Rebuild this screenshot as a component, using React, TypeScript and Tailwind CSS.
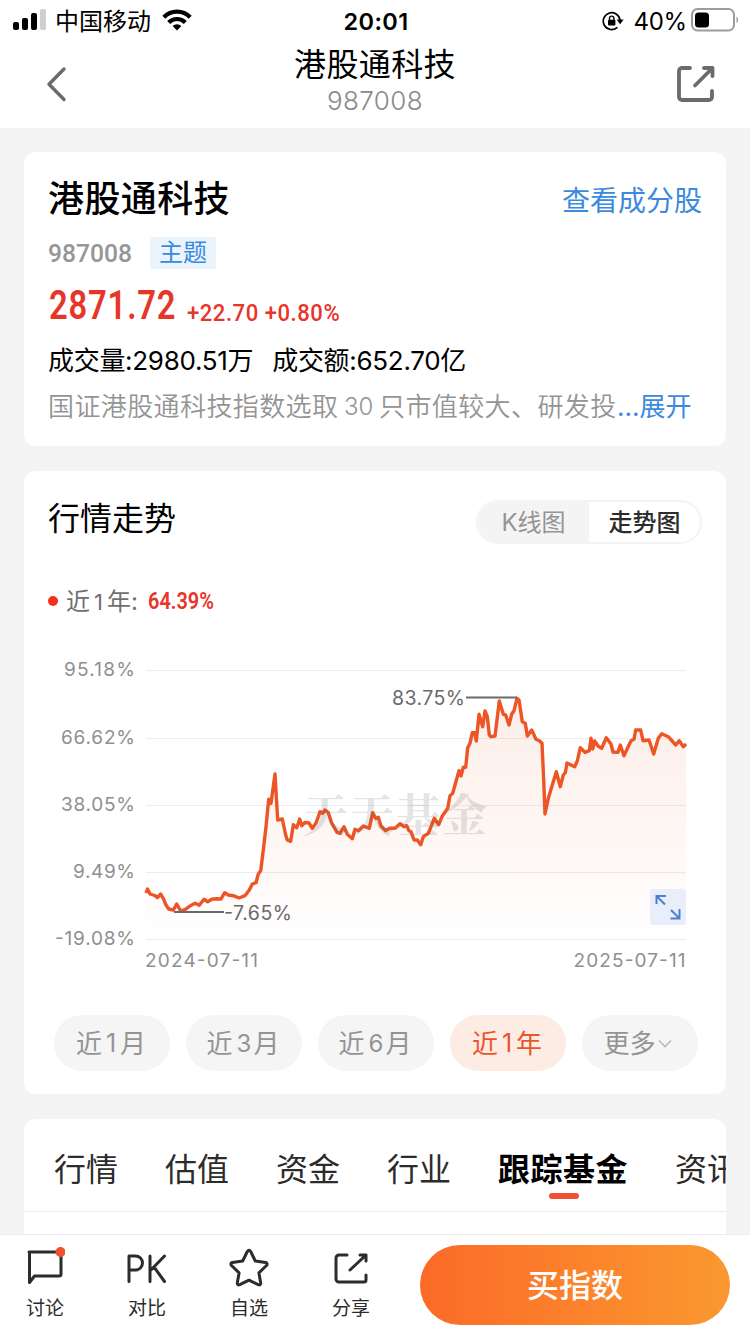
const BASE_FONT = "font-['Inter','Noto_Sans_CJK_SC',sans-serif]";
const DIN_FONT = "font-['Roboto','Noto_Sans_CJK_SC',sans-serif]";

const GRID = [
  { y: 670, label: '95.18%', width: 71 },
  { y: 738, label: '66.62%', width: 74 },
  { y: 805, label: '38.05%', width: 74 },
  { y: 872, label: '9.49%', width: 62 },
  { y: 939, label: '-19.08%', width: 80 }
];

const TREND =
  '146,893 147.5,889 150,894 154.7,895.5 157.5,897.5 160.7,894 163.3,898.5 166,905 168.7,909 173.3,910 176.7,904 180.7,911 185,909.7 190,906 195,903.3 199.3,905.3 204,899.3 207.7,901.7 211.7,899.3 216.7,898.7 221,899 224.7,892.7 228.3,895 233.3,895.7 239,898 245,895.7 249.3,890 252.3,884 256,882.7 258.3,874 260.7,870.7 263.3,850 266,826.7 268.7,799.3 271,803.3 275,774 277.7,820 282.3,819 285.7,835 287.3,840 290.7,841.3 293.3,824.7 296.7,827.7 299.7,819 301.7,825.7 305,822.5 309,823 312.3,828.3 316,823 320,811.7 322.7,813.3 325,810 328.3,812.5 331.7,823 337,832.3 340,833.3 344,826.7 347.3,834.3 352.3,838.7 355,829.3 358.3,830.7 363.3,826 369.3,828.3 372.7,812.7 375.7,818.3 378.3,817.3 381,826 385.7,830.7 389.3,828.3 395,828.3 400,823.7 404,826.7 406.7,825.7 409,830.7 411,831.7 414,840 417.3,840 420.7,844.7 423.3,836.7 428.3,833.3 434.3,818.3 438.7,824.7 442.3,816 447.7,808.3 450,795.7 452.7,793.3 455,785 459,770.7 461,776 463.3,767.3 465.7,767.3 467.7,747.7 470,743.3 472.3,732.7 474.7,732.7 476.3,741 479,714.3 482.7,726.7 485,711 487.3,716.7 489.3,735 491,736.7 495,736 499.3,701 503.3,714.3 505.7,715 509,725 511.7,714 514,710.7 517,698.3 519,700 522.3,721.7 525.3,723.3 527.3,736 531.7,730 536,739.3 539.3,740.7 542,743.3 543.7,780 545,814 548.3,798.3 556.3,771.7 560.3,786.7 563.3,775 565.3,772.7 567,763 574.7,766.7 577.3,761 580.3,747.7 585,752.3 589.3,750.7 591,738.3 592.7,749 594.7,741 598,746 601.7,748.3 606.3,737.7 611,744 613,752 618,752.3 620.3,745 624,755.7 627.7,747.7 631,740.7 634,739.3 635.7,730 640.7,730 643,740.7 649,740 653.7,754 658.3,738.3 661.7,733.7 668.3,736.7 675.7,745 679.3,740.7 683.3,746.7 686,744';

const PERIODS = [
  { count: '1', unit: '月' },
  { count: '3', unit: '月' },
  { count: '6', unit: '月' },
  { count: '1', unit: '年', active: true }
];
const TABS = ['行情', '估值', '资金', '行业', '跟踪基金', '资讯'];

function StatusBar() {
  return (
    <div className="grid h-10 grid-cols-3 items-center pl-[13px] pr-[11px] text-[24px] leading-[37px] text-black">
      <div className="flex items-center">
        <svg width="33" height="22" viewBox="0 0 33 22">
          <rect x="0" y="13" width="6" height="8" rx="2" />
          <rect x="9" y="9" width="6" height="12" rx="2" />
          <rect x="18" y="4" width="6" height="17" rx="2" />
          <rect x="27" y="0" width="6" height="21" rx="2" fill="#cfcfcf" />
        </svg>
        <span className="ml-[9px] whitespace-nowrap pt-[3px]">中国移动</span>
        <svg className="ml-[11px]" width="30" height="22" viewBox="0 0 30 22" fill="none" stroke="#000" strokeWidth="4.2">
          <path d="M1.8 8.2a18.6 18.6 0 0 1 26.4 0" />
          <path d="M6.7 13.4a11.8 11.8 0 0 1 16.6 0" />
          <path d="M15 21.5l-4.4-4.6a6.4 6.4 0 0 1 8.8 0z" fill="#000" stroke="none" />
        </svg>
      </div>
      <div className="pt-[2px] text-center text-[23.5px] font-semibold tracking-[0.4px]">20:01</div>
      <div className="flex items-center justify-end">
        <svg className="mt-px" width="22" height="20" viewBox="0 0 22 20" fill="none" stroke="#000" strokeWidth="1.7">
          <path d="M15.4 16.3A8.4 8.4 0 1 1 18 9" />
          <path d="M14.6 8.6h7l-3.4 4.6z" fill="#000" stroke="none" />
          <rect x="6" y="8.8" width="7.4" height="5.6" rx="1" fill="#000" stroke="none" />
          <path d="M7.5 9V7.3a2.2 2.2 0 0 1 4.4 0V9" strokeWidth="1.4" />
        </svg>
        <span className="ml-[9px] pt-[2px] text-[24px] tracking-[-0.2px]">40%</span>
        <svg className="ml-[4px]" width="48" height="24" viewBox="0 0 48 24">
          <rect x="1" y="1" width="42" height="21.5" rx="5.5" fill="none" stroke="#9c9c9c" strokeWidth="2" />
          <rect x="4" y="4.5" width="14" height="15" rx="3.5" />
          <path d="M45.5 8.5v6.5c2.2-1 2.2-5.5 0-6.5z" fill="#9c9c9c" />
        </svg>
      </div>
    </div>
  );
}

function NavBar() {
  return (
    <div className="flex h-[88px] items-center justify-between pl-[46px] pr-[35px]">
      <svg width="22" height="36" viewBox="0 0 22 36" fill="none" stroke="#6b6b6b" strokeWidth="3.4" strokeLinecap="round" strokeLinejoin="round">
        <path d="M18 3L3 18.2L18 33.5" />
      </svg>
      <div className="flex h-full flex-col items-center pr-[4px] pl-[9px] pt-[5px]">
        <div className="text-[32px] leading-[40px] tracking-[0.4px] text-black">港股通科技</div>
        <div className="text-[26px] font-[350] leading-[31px] tracking-[0.4px] text-[#8a8a8a]">987008</div>
      </div>
      <svg width="38" height="38" viewBox="0 0 38 38" fill="none" stroke="#6b6b6b" strokeWidth="3.8" strokeLinecap="round" strokeLinejoin="round">
        <path d="M13 3H5a3 3 0 0 0-3 3v26a3 3 0 0 0 3 3h27a3 3 0 0 0 3-3v-6" />
        <path d="M27 3h8.5v8M35 3.5L18 20.5" />
      </svg>
    </div>
  );
}

function SummaryCard() {
  return (
    <section className="h-[294px] rounded-xl bg-white px-6 pt-[23px]">
      <div className="flex h-12 items-center justify-between">
        <h1 className="text-[36px] font-medium leading-[48px] tracking-[0.4px] text-black">港股通科技</h1>
        <a className="pt-1 text-[28px] leading-[44px] text-[#3b8ade]">查看成分股</a>
      </div>
      <div className="mt-[14px] flex h-8 items-center">
        <div className={`w-[102px] ${DIN_FONT}`}>
          <span className="inline-block origin-left scale-x-[0.93] text-[26.5px] font-medium leading-8 text-[#969696]">987008</span>
        </div>
        <span className="h-8 w-[66px] bg-[#e9f4fc] text-center text-[24px] leading-[32px] text-[#3b8ade]">主题</span>
      </div>
      <div className={`mt-[13px] flex h-12 items-baseline whitespace-nowrap pl-px text-[#e8352a] ${DIN_FONT}`}>
        <div className="w-[138px]">
          <span className="inline-block origin-left scale-x-[0.8] text-[41px] font-semibold leading-[46px] tracking-[1px]">2871.72</span>
        </div>
        <span className="inline-block origin-left translate-y-[2px] scale-x-[0.9] text-[24.5px] font-medium leading-8 tracking-[0.6px]">+22.70 +0.80%</span>
      </div>
      <div className="mt-[11px] flex h-[40px] items-center gap-[19px] whitespace-nowrap text-[26px] leading-10 text-black">
        <span className="tracking-[-0.3px]">成交量:2980.51万</span>
        <span className="tracking-[-0.3px]">成交额:652.70亿</span>
      </div>
      <div className="mt-[6px] flex h-10 items-center whitespace-nowrap text-[26px] leading-10 text-[#949494]">
        <span className="w-[296px] font-[350] tracking-[0.4px]">国证港股通科技指数选取</span>
        <span className="w-[35px] text-[24px] font-[350]">30</span>
        <span className="w-[238px] font-[350] tracking-[0.4px]">只市值较大、研发投</span>
        <span className="text-[#3b8ade]">...展开</span>
      </div>
    </section>
  );
}

function TrendChart() {
  return (
    <svg className="block" width="702" height="336" viewBox="24 649 702 336">
      <defs>
        <linearGradient id="area" x1="0" y1="698" x2="0" y2="939" gradientUnits="userSpaceOnUse">
          <stop offset="0" stopColor="#e8602e" stopOpacity="0.11" />
          <stop offset="0.6" stopColor="#e8602e" stopOpacity="0.05" />
          <stop offset="1" stopColor="#e8602e" stopOpacity="0" />
        </linearGradient>
      </defs>
      {GRID.map(({ y, label, width }) => (
        <g key={y}>
          <line x1="146" x2="686" y1={y + 0.5} y2={y + 0.5} stroke="#ededed" />
          <text x={135 - width} y={y + 5.5} textLength={width} fontSize="19" fill="#8f8f8f">{label}</text>
        </g>
      ))}
      <polygon points={`146,939 ${TREND} 686,939`} fill="url(#area)" />
      <polyline points={TREND} fill="none" stroke="#ee5526" strokeWidth="3.4" strokeLinejoin="round" />
      <text x="303" y="832" fontSize="45" fontWeight="700" textLength="184" fill="#555" fillOpacity="0.18" className="font-['Noto_Serif_CJK_SC','Noto_Sans_CJK_SC',serif]">天天基金</text>
      <g stroke="#666b70" strokeWidth="2">
        <line x1="174" x2="224" y1="912" y2="912" />
        <line x1="466" x2="517" y1="697.5" y2="697.5" />
      </g>
      <g fontSize="19.5" fill="#6a6a6a">
        <text x="224" y="919.5" textLength="68">-7.65%</text>
        <text x="392" y="705" textLength="73">83.75%</text>
      </g>
      <g fontSize="19" fill="#8f8f8f">
        <text x="145" y="967" textLength="113">2024-07-11</text>
        <text x="573.5" y="967" textLength="112">2025-07-11</text>
      </g>
      <rect x="650" y="889" width="36" height="36" rx="3" fill="#e9eefa" />
      <g fill="none" stroke="#4c7fd0" strokeWidth="2">
        <path d="M656.5 904v-8h9.500M657 896.500l8 8" />
        <path d="M670.5 918.500h9v-9.500M679 918l-8-8" />
      </g>
    </svg>
  );
}

function TrendCard() {
  return (
    <section className="flex h-[623px] flex-col rounded-xl bg-white">
      <div className="flex items-center justify-between px-6 pt-[29px]">
        <h2 className="-mt-[6px] text-[32px] leading-[44px] text-black">行情走势</h2>
        <div className="flex h-11 w-[226px] overflow-hidden rounded-full border-2 border-[#f4f4f4] text-center text-[24px] leading-[42px]">
          <span className="w-[111px] bg-[#f4f4f4] text-[#949494]">K线图</span>
          <span className="flex-1 font-medium text-[#2c2c2c]">走势图</span>
        </div>
      </div>
      <div className="mt-[37px] flex h-10 items-center px-6 text-[24px] leading-10 text-[#707070]">
        <span className="mr-2 size-[10px] rounded-full bg-[#f5301f]" />
        <span className="w-[82px] whitespace-nowrap pt-px">近<span className="mx-1 text-[22px]">1</span>年:</span>
        <span className={`origin-left scale-x-[0.83] text-[24px] font-semibold text-[#e8352a] ${DIN_FONT}`}>64.39%</span>
      </div>
      <div className="mt-[28px]">
        <TrendChart />
      </div>
      <div className="mt-[30px] flex gap-4 pl-[30px] text-[26px]">
        {PERIODS.map(({ count, unit, active }) => (
          <button
            key={count + unit}
            className={`flex h-14 w-[116px] items-center justify-center rounded-full pr-[2px] pt-px ${
              active ? 'bg-[#fdece4] text-[#e9552b]' : 'bg-[#f5f5f5] text-[#949494]'
            }`}
          >
            近<span className={count === '1' ? 'mx-[4px] text-[25px]' : 'ml-[4px] mr-[2px] text-[24px]'}>{count}</span>{unit}
          </button>
        ))}
        <button className="flex h-14 w-[116px] items-center justify-center rounded-full bg-[#f5f5f5] pr-[5px] pt-px text-[#949494]">
          更多
          <svg className="ml-0.5" width="14" height="9" viewBox="0 0 14 9" fill="none" stroke="#b8b8b8" strokeWidth="1.6">
            <path d="M1 1.500l6 6 6-6" />
          </svg>
        </button>
      </div>
    </section>
  );
}

function TabsCard() {
  return (
    <section className="h-[115px] overflow-hidden rounded-t-xl bg-white">
      <div className="flex h-[93px] gap-[47px] whitespace-nowrap border-b border-[#ececec] pl-[30px] pt-[29px] text-[32px] leading-[44px] text-[#2c2c2c]">
        {TABS.map((tab) =>
          tab === '跟踪基金' ? (
            <div key={tab} className="flex flex-col items-center font-bold tracking-[0.5px] text-black">
              {tab}
              <span className="ml-0.5 mt-px h-[6px] w-[30px] rounded-full bg-[#f0502d]" />
            </div>
          ) : (
            <span key={tab}>{tab}</span>
          )
        )}
      </div>
    </section>
  );
}

function BottomBar() {
  return (
    <footer className="flex h-[100px] shrink-0 border-t border-[#ebebeb] bg-white text-[19px] leading-6 text-[#2c2c2c]">
      <div className="grid w-[400px] grid-cols-4 pt-[12px] [&>div]:flex [&>div]:w-[90px] [&>div]:flex-col [&>div]:items-center [&>div]:gap-[6px]">
        <div>
          <svg width="40" height="44" viewBox="0 0 40 44" fill="none" stroke="#2c2c2c" strokeWidth="3" strokeLinecap="round" strokeLinejoin="round">
            <path d="M4 5h30a2 2 0 0 1 2 2v20a2 2 0 0 1-2 2H9.500L4.500 35.500V6" />
            <circle cx="35.5" cy="5" r="5" fill="#f0502d" stroke="none" />
          </svg>
          讨论
        </div>
        <div className="ml-[2px]">
          <svg width="42" height="44" viewBox="0 0 42 44" fill="none" stroke="#2c2c2c" strokeWidth="3" strokeLinecap="round" strokeLinejoin="round">
            <path d="M3 34.500V9h6.500a7 7 0 0 1 0 14H3M24 9v25.500M38.500 9L24 24M28 20l10.500 14.500" />
          </svg>
          对比
        </div>
        <div className="ml-[4px]">
          <svg width="42" height="44" viewBox="0 0 42 44" fill="none" stroke="#2c2c2c" strokeWidth="3" strokeLinejoin="round">
            <path d="M19.300 4.500q1.700-2.500 3.400 0l4.600 9.500 10.300 1.500q2.500.8.900 3l-7.600 7.300 1.800 10.300q0 2.500-2.500 1.600L21 33.200l-9.200 4.500q-2.500.9-2.500-1.600l1.800-10.300L3.500 18.500q-1.600-2.200.9-3L14.700 14z" />
          </svg>
          自选
        </div>
        <div className="ml-[6px]">
          <svg width="40" height="44" viewBox="0 0 40 44" fill="none" stroke="#2c2c2c" strokeWidth="3" strokeLinecap="round" strokeLinejoin="round">
            <path d="M16 8H8a3 3 0 0 0-3 3v21a3 3 0 0 0 3 3h25a2 2 0 0 0 2-2v-5" />
            <path d="M29 8h6v6M35 8L19 23" />
          </svg>
          分享
        </div>
      </div>
      <button className="ml-5 mt-[10px] h-20 w-[310px] rounded-full bg-linear-to-r from-[#fb6a28] to-[#fa982f] pt-px text-[32px] font-medium text-white">
        买指数
      </button>
    </footer>
  );
}

export default function App() {
  return (
    <div className={`flex h-[1334px] w-[750px] flex-col overflow-hidden bg-[#f4f4f4] ${BASE_FONT}`}>
      <header className="shrink-0 bg-white">
        <StatusBar />
        <NavBar />
      </header>
      <main className="flex h-[1106px] shrink-0 flex-col gap-[25px] px-6 pt-6">
        <SummaryCard />
        <TrendCard />
        <TabsCard />
      </main>
      <BottomBar />
    </div>
  );
}
